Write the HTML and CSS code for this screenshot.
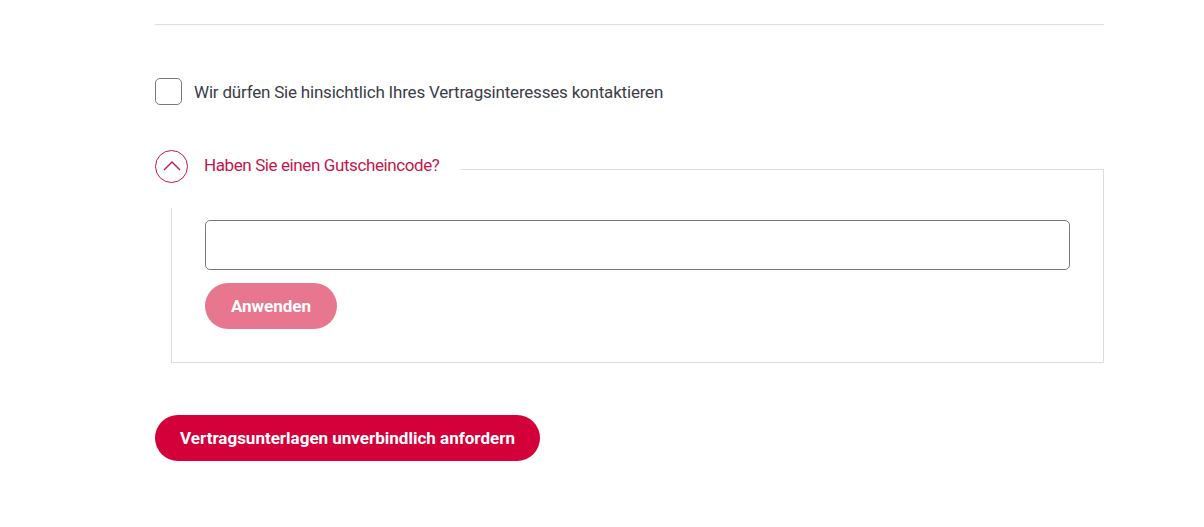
FILE: index.html
```html
<!DOCTYPE html>
<html lang="de">
<head>
<meta charset="utf-8">
<title>Vertragsunterlagen</title>
<link rel="stylesheet" href="styles.css">
</head>
<body>
<div class="page">
  <div class="divider"></div>
  <label class="consent">
    <span class="checkbox"></span>
    <span class="consent-text">Wir dürfen Sie hinsichtlich Ihres Vertragsinteresses kontaktieren</span>
  </label>
  <div class="voucher">
    <div class="voucher-head">
      <span class="toggle">
        <svg width="18" height="11" viewBox="0 0 18 11"><path d="M1 10 L9 2 L17 10" fill="none" stroke="#c2174b" stroke-width="1.4"/></svg>
      </span>
      <span class="voucher-title">Haben Sie einen Gutscheincode?</span>
      <span class="voucher-line"></span>
    </div>
    <div class="voucher-panel">
      <input class="code-input" type="text" aria-label="Gutscheincode">
      <button class="btn btn-apply">Anwenden</button>
    </div>
  </div>
  <button class="btn btn-primary">Vertragsunterlagen unverbindlich anfordern</button>
</div>
</body>
</html>
```
FILE: styles.css
```css
* { box-sizing: border-box; }
html, body { margin: 0; padding: 0; background: #fff; }
body { font-family: Roboto, "Noto Sans", sans-serif; color: #3b3d48; }
.page { width: 949px; margin-left: 155px; padding-top: 24px; }
.divider { height: 1px; background: #dedede; }
.consent { display: flex; align-items: center; margin-top: 53px; height: 27px; cursor: pointer; }
.checkbox { width: 27px; height: 27px; border: 1px solid #7a7a7a; border-radius: 5px; flex: none; }
.consent-text { margin-left: 12px; font-size: 17px; letter-spacing: -0.2px; }
.voucher { margin-top: 45px; }
.voucher-head { display: flex; align-items: flex-start; }
.toggle { width: 33px; height: 33px; border: 1.4px solid #c2174b; border-radius: 50%; display: flex; align-items: center; justify-content: center; flex: none; padding-bottom: 3px; }
.voucher-title { margin-left: 16px; margin-top: 5px; font-size: 17px; letter-spacing: -0.4px; color: #c2174b; }
.voucher-line { flex: 1; margin-left: 22px; margin-top: 19px; height: 39px; border-top: 1px solid #dcdcdc; border-right: 1px solid #dcdcdc; }
.voucher-panel { margin-left: 16px; border: 1px solid #dcdcdc; border-top: none; padding: 12px 33px 33px 33px; display: flex; flex-direction: column; align-items: flex-start; }
.code-input { width: 100%; height: 50px; border: 1px solid #7a7a7a; border-radius: 5px; font: inherit; padding: 0 14px; outline: none; }
.btn { font-family: Roboto, "Noto Sans", sans-serif; font-weight: 700; font-size: 17px; color: #fff; border: none; border-radius: 23px; height: 46px; cursor: pointer; }
.btn-apply { margin-top: 13px; width: 132px; background: #e8768f; }
.btn-primary { margin-top: 52px; width: 385px; background: #d4003a; }
```
